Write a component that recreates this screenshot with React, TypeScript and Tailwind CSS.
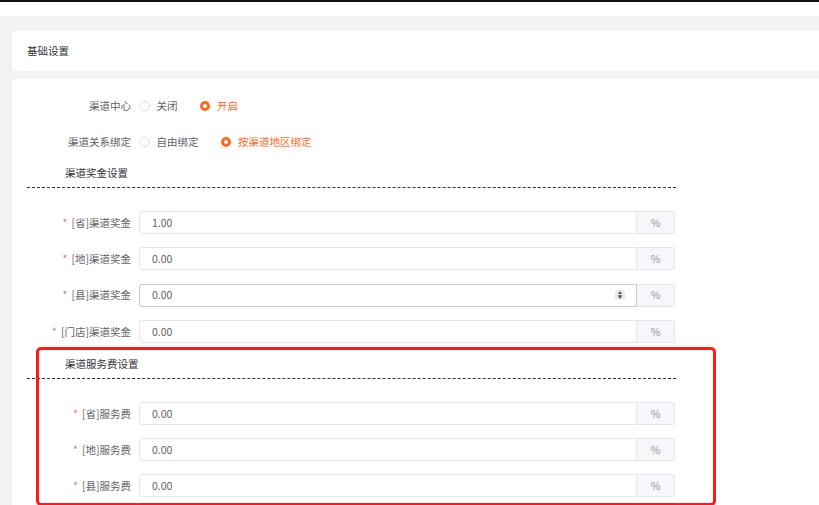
import React from "react";

const FONT = { fontFamily: '"Noto Sans CJK SC", "Noto Sans", "Liberation Sans", sans-serif' };

function Radio({ label, checked }: { label: string; checked?: boolean }) {
  return (
    <label className="flex items-center mr-[22px] cursor-pointer">
      {checked ? (
        <span className="w-[10.5px] h-[10.5px] rounded-full bg-[#ff6a1a] flex items-center justify-center">
          <span className="w-[4px] h-[4px] rounded-full bg-white" />
        </span>
      ) : (
        <span className="w-[10.5px] h-[10.5px] rounded-full border border-[#dcdfe6] bg-white" />
      )}
      <span className={"ml-[7px] " + (checked ? "text-[#ff6a1a]" : "text-[#606266]")}>{label}</span>
    </label>
  );
}

function RadioRow({ label, options, value }: { label: string; options: string[]; value: number }) {
  return (
    <div className="flex items-center h-[22px]">
      <div className="w-[119px] text-right text-[#606266]">{label}</div>
      <div className="flex items-center ml-[8px]">
        {options.map((o, i) => (
          <Radio key={o} label={o} checked={i === value} />
        ))}
      </div>
    </div>
  );
}

function Spinner() {
  return (
    <div className="w-[10px] h-[10px] bg-[#ececec] rounded-[1px] flex flex-col items-center justify-center gap-[1px]">
      <span className="w-0 h-0 border-l-[2px] border-r-[2px] border-b-[3px] border-l-transparent border-r-transparent border-b-[#555]" />
      <span className="w-[4px] h-[0.5px] bg-[#777]" />
      <span className="w-0 h-0 border-l-[2px] border-r-[2px] border-t-[3px] border-l-transparent border-r-transparent border-t-[#555]" />
    </div>
  );
}

function InputRow({ label, value, hover }: { label: string; value: string; hover?: boolean }) {
  return (
    <div className="flex items-center h-[23px]">
      <div className="w-[119px] text-right text-[#606266] whitespace-nowrap">
        <span className="text-[#f56c6c] mr-[4px]">*</span>
        {label}
      </div>
      <div className="flex ml-[8px] h-full">
        <div
          className={
            "w-[498px] h-full flex items-center justify-between pl-[12px] pr-[11px] bg-white border rounded-l-[3px] text-[#606266] " +
            (hover ? "border-[#c8c9cc]" : "border-[#e4e7ed]")
          }
        >
          <span>{value}</span>
          {hover && <Spinner />}
        </div>
        <div className="w-[38px] h-full flex items-center justify-center bg-[#f5f7fa] border border-l-0 border-[#e4e7ed] rounded-r-[3px] text-[#909399]">
          %
        </div>
      </div>
    </div>
  );
}

function Section({ title }: { title: string }) {
  return (
    <>
      <div className="pl-[53px] text-[#303133] leading-[17px]">{title}</div>
      <div className="ml-[15px] w-[649px] mt-[6px] border-t border-dashed border-[#333]" />
    </>
  );
}

export default function App() {
  const bonus = [
    { label: "[省]渠道奖金", value: "1.00" },
    { label: "[地]渠道奖金", value: "0.00" },
    { label: "[县]渠道奖金", value: "0.00", hover: true },
    { label: "[门店]渠道奖金", value: "0.00" },
  ];
  const fees = [
    { label: "[省]服务费", value: "0.00" },
    { label: "[地]服务费", value: "0.00" },
    { label: "[县]服务费", value: "0.00" },
  ];

  return (
    <div className="relative w-full h-[505px] overflow-hidden bg-white text-[10.5px]" style={FONT}>
      <div className="h-[2px] bg-[#111]" />
      <div className="h-[14px] bg-white" />
      <div className="bg-[#f2f2f2] pt-[15px] pl-[12px] h-[489px]">
        <div className="h-[40px] bg-white rounded-l-[3px] flex items-center pl-[15px] text-[#333]">基础设置</div>
        <div className="mt-[8px] bg-white rounded-tl-[3px] h-[430px] pt-[16px]">
          <RadioRow label="渠道中心" options={["关闭", "开启"]} value={1} />
          <div className="mt-[14px]">
            <RadioRow label="渠道关系绑定" options={["自由绑定", "按渠道地区绑定"]} value={1} />
          </div>
          <div className="mt-[11px]">
            <Section title="渠道奖金设置" />
          </div>
          <div className="mt-[23px] flex flex-col gap-[13.3px]">
            {bonus.map((r) => (
              <InputRow key={r.label} {...r} />
            ))}
          </div>
          <div className="mt-[12px]">
            <Section title="渠道服务费设置" />
          </div>
          <div className="mt-[23px] flex flex-col gap-[13.3px]">
            {fees.map((r) => (
              <InputRow key={r.label} {...r} />
            ))}
          </div>
        </div>
      </div>
      <div className="absolute left-[36px] top-[347px] w-[680px] h-[159px] border-[3px] border-[#ff1a1a] rounded-[5px]" />
    </div>
  );
}
